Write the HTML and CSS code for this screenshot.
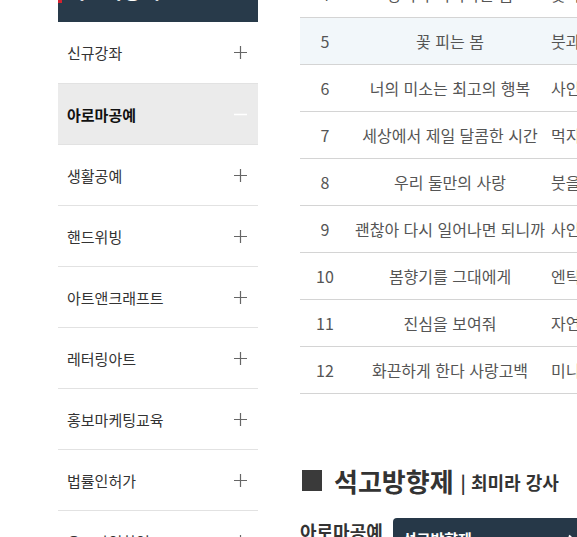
FILE: index.html
```html
<!DOCTYPE html>
<html lang="ko">
	<head>
		<meta charset="UTF-8" />
		<meta name="viewport" content="width=device-width, initial-scale=1.0" />
		<title>아로마공예</title>
		<link rel="stylesheet" href="styles.css">
	</head>
	<body>
		<div class="wrap">
			<aside class="sidebar">
				<div class="side-head">
					<h2 class="side-title">아로마공예</h2>
				</div>
				<ul class="side-menu">
					<li class="side-item">
						<span>신규강좌</span>
						<svg class="plus" width="13" height="13" viewBox="0 0 13 13"><path d="M6.5 0v13M0 6.5h13" /></svg>
					</li>
					<li class="side-item active">
						<span>아로마공예</span>
						<svg class="plus" width="13" height="13" viewBox="0 0 13 13"><path d="M0 6.5h13" /></svg>
					</li>
					<li class="side-item">
						<span>생활공예</span>
						<svg class="plus" width="13" height="13" viewBox="0 0 13 13"><path d="M6.5 0v13M0 6.5h13" /></svg>
					</li>
					<li class="side-item">
						<span>핸드위빙</span>
						<svg class="plus" width="13" height="13" viewBox="0 0 13 13"><path d="M6.5 0v13M0 6.5h13" /></svg>
					</li>
					<li class="side-item">
						<span>아트앤크래프트</span>
						<svg class="plus" width="13" height="13" viewBox="0 0 13 13"><path d="M6.5 0v13M0 6.5h13" /></svg>
					</li>
					<li class="side-item">
						<span>레터링아트</span>
						<svg class="plus" width="13" height="13" viewBox="0 0 13 13"><path d="M6.5 0v13M0 6.5h13" /></svg>
					</li>
					<li class="side-item">
						<span>홍보마케팅교육</span>
						<svg class="plus" width="13" height="13" viewBox="0 0 13 13"><path d="M6.5 0v13M0 6.5h13" /></svg>
					</li>
					<li class="side-item">
						<span>법률인허가</span>
						<svg class="plus" width="13" height="13" viewBox="0 0 13 13"><path d="M6.5 0v13M0 6.5h13" /></svg>
					</li>
					<li class="side-item">
						<span>오프라인창업</span>
						<svg class="plus" width="13" height="13" viewBox="0 0 13 13"><path d="M6.5 0v13M0 6.5h13" /></svg>
					</li>
				</ul>
			</aside>

			<main class="content">
				<div class="lesson-table">
					<div class="row"><span class="num">4</span><span class="title">향기가 피어나는 봄</span><span class="mat">붓과 물감</span></div>
					<div class="row hover"><span class="num">5</span><span class="title">꽃 피는 봄</span><span class="mat">붓과 물감</span></div>
					<div class="row"><span class="num">6</span><span class="title">너의 미소는 최고의 행복</span><span class="mat">사인펜</span></div>
					<div class="row"><span class="num">7</span><span class="title">세상에서 제일 달콤한 시간</span><span class="mat">먹지</span></div>
					<div class="row"><span class="num">8</span><span class="title">우리 둘만의 사랑</span><span class="mat">붓을</span></div>
					<div class="row"><span class="num">9</span><span class="title">괜찮아 다시 일어나면 되니까</span><span class="mat">사인펜</span></div>
					<div class="row"><span class="num">10</span><span class="title">봄향기를 그대에게</span><span class="mat">엔틱</span></div>
					<div class="row"><span class="num">11</span><span class="title">진심을 보여줘</span><span class="mat">자연</span></div>
					<div class="row"><span class="num">12</span><span class="title">화끈하게 한다 사랑고백</span><span class="mat">미니</span></div>
				</div>

				<h3 class="course-head">
					<span class="square"></span>
					<span class="course-name">석고방향제</span>
					<span class="teacher">| 최미라 강사</span>
				</h3>

				<div class="course-select">
					<span class="cat">아로마공예</span>
					<div class="select-box">
						<span>석고방향제</span>
						<svg width="13" height="9" viewBox="0 0 13 9"><path d="M1 1.5l5.5 5.5 5.5-5.5" /></svg>
					</div>
				</div>
			</main>
		</div>
	</body>
</html>
```

FILE: styles.css
```css
html, body {
	margin: 0;
	padding: 0;
	overflow: hidden;
	background-color: #fff;
}

body {
	font-family: 'Noto Sans CJK KR', 'Liberation Sans', sans-serif;
	color: #333;
}

.wrap {
	display: flex;
	gap: 42px;
	padding-left: 58px;
	width: 900px;
}

/* sidebar */
.sidebar {
	width: 200px;
	flex-shrink: 0;
}

.side-head {
	height: 62px;
	margin-top: -40px;
	background-color: #283a4a;
	box-sizing: border-box;
	padding-top: 19px;
}

.side-title {
	margin: 0;
	border-left: 4px solid #d3222f;
	padding-left: 6px;
	font-size: 20px;
	line-height: 24px;
	color: #fff;
}

.side-menu {
	list-style: none;
	margin: 0;
	padding: 0;
}

.side-item {
	display: flex;
	align-items: center;
	justify-content: space-between;
	height: 60px;
	padding: 0 11px 0 9px;
	border-bottom: 1px solid #e2e2e2;
	font-size: 15px;
	color: #333;
}

.side-item:first-child {
	height: 61px;
}

.plus {
	fill: none;
	stroke: #666;
	stroke-width: 1.2;
}

.side-item.active {
	background-color: #ebebeb;
	font-weight: bold;
	color: #111;
}

.side-item.active .plus {
	stroke: #fff;
	stroke-width: 1.5;
}

/* main */
.content {
	width: 600px;
	flex-shrink: 0;
	margin-top: -29px;
}

.row {
	display: grid;
	grid-template-columns: 50px 200px 1fr;
	align-items: center;
	height: 46px;
	border-bottom: 1px solid #d4d4d4;
	font-size: 16px;
	color: #555;
}

.row.hover {
	background-color: #f2f7fa;
}

.num,
.title {
	text-align: center;
	white-space: nowrap;
}

.mat {
	padding-left: 1px;
	white-space: nowrap;
}

.course-head {
	display: flex;
	align-items: center;
	margin: 69px 0 0 2px;
	height: 34px;
	font-weight: bold;
	color: #333;
}

.square {
	width: 20px;
	height: 21px;
	background-color: #3a3a3a;
	margin-right: 12px;
}

.course-name {
	font-size: 26px;
	margin-right: 7px;
}

.teacher {
	font-size: 18px;
	margin-top: 4px;
}

.course-select {
	display: flex;
	align-items: flex-start;
	gap: 10px;
	margin-top: 21px;
}

.cat {
	font-size: 18px;
	font-weight: bold;
	line-height: 22px;
	margin-top: 2px;
	color: #333;
}

.select-box {
	display: flex;
	align-items: center;
	justify-content: space-between;
	width: 178px;
	height: 40px;
	padding: 0 4px 0 10px;
	background-color: #263848;
	border-radius: 4px;
	color: #fff;
	font-size: 15px;
	font-weight: bold;
}

.select-box svg {
	fill: none;
	stroke: #fff;
	stroke-width: 2;
}
```
